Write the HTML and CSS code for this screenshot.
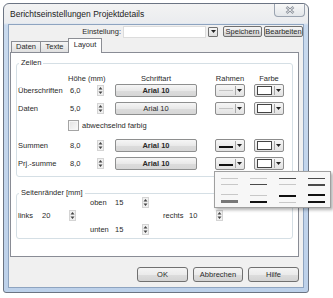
FILE: index.html
```html
<!DOCTYPE html>
<html lang="de">
<head>
    <meta charset="UTF-8">
    <title>Berichtseinstellungen Projektdetails</title>
    <link rel="stylesheet" href="styles.css">
</head>
<body>
    <div class="window">
        <div class="titlebar">
            <span class="title">Berichtseinstellungen Projektdetails</span>
            <span class="close">
                <svg width="10" height="8" viewBox="0 0 10 8"><path d="M1.5 1l7 6M8.5 1l-7 6" stroke="#8b929c" stroke-width="2.6"/><path d="M1.5 1l7 6M8.5 1l-7 6" stroke="#f4f4f4" stroke-width="0.9"/></svg>
            </span>
        </div>
        <div class="client">
            <div class="toolbar">
                <span>Einstellung:</span>
                <span class="combo"></span>
                <span class="dd-btn"><svg width="5" height="3" viewBox="0 0 5 3"><path d="M0 0h5L2.5 3z" fill="#222"/></svg></span>
                <button class="btn small">Speichern</button>
                <button class="btn small">Bearbeiten</button>
            </div>
            <div class="tabs">
                <div class="tab t-daten">Daten</div>
                <div class="tab t-texte">Texte</div>
                <div class="tab t-layout active">Layout</div>
            </div>
            <div class="panel">
                <div class="group">
                    <div class="group-title">Zeilen</div>
                    <div class="rows">
                        <div class="row head">
                            <span></span>
                            <span>Höhe (mm)</span>
                            <span class="center font-col">Schriftart</span>
                            <span class="center dd-col">Rahmen</span>
                            <span class="center dd-col">Farbe</span>
                        </div>
                        <div class="row">
                            <span>Überschriften</span>
                            <span class="spin">6,0<svg width="7" height="11" viewBox="0 0 7 11"><rect x="0.5" y="0.5" width="6" height="10" fill="#f0f0f0" stroke="#d4d4d4"/><path d="M1.5 4.5h4L3.5 2zM1.5 6.5h4L3.5 9z" fill="#444"/></svg></span>
                            <button class="font-btn bold">Arial 10</button>
                            <span class="dd"><span class="dd-face"><i class="ln light"></i></span><span class="dd-arrow"><svg width="5" height="3" viewBox="0 0 5 3"><path d="M0 0h5L2.5 3z" fill="#222"/></svg></span></span>
                            <span class="dd"><span class="dd-face"><i class="swatch"></i></span><span class="dd-arrow"><svg width="5" height="3" viewBox="0 0 5 3"><path d="M0 0h5L2.5 3z" fill="#222"/></svg></span></span>
                        </div>
                        <div class="row mt5">
                            <span>Daten</span>
                            <span class="spin">5,0<svg width="7" height="11" viewBox="0 0 7 11"><rect x="0.5" y="0.5" width="6" height="10" fill="#f0f0f0" stroke="#d4d4d4"/><path d="M1.5 4.5h4L3.5 2zM1.5 6.5h4L3.5 9z" fill="#444"/></svg></span>
                            <button class="font-btn">Arial 10</button>
                            <span class="dd"><span class="dd-face"><i class="ln light"></i></span><span class="dd-arrow"><svg width="5" height="3" viewBox="0 0 5 3"><path d="M0 0h5L2.5 3z" fill="#222"/></svg></span></span>
                            <span class="dd"><span class="dd-face"><i class="swatch"></i></span><span class="dd-arrow"><svg width="5" height="3" viewBox="0 0 5 3"><path d="M0 0h5L2.5 3z" fill="#222"/></svg></span></span>
                        </div>
                        <div class="row check-row">
                            <span></span>
                            <label class="check"><i class="box"></i>abwechselnd farbig</label>
                        </div>
                        <div class="row mt7">
                            <span>Summen</span>
                            <span class="spin">8,0<svg width="7" height="11" viewBox="0 0 7 11"><rect x="0.5" y="0.5" width="6" height="10" fill="#f0f0f0" stroke="#d4d4d4"/><path d="M1.5 4.5h4L3.5 2zM1.5 6.5h4L3.5 9z" fill="#444"/></svg></span>
                            <button class="font-btn bold">Arial 10</button>
                            <span class="dd"><span class="dd-face"><i class="ln heavy"></i></span><span class="dd-arrow"><svg width="5" height="3" viewBox="0 0 5 3"><path d="M0 0h5L2.5 3z" fill="#222"/></svg></span></span>
                            <span class="dd"><span class="dd-face"><i class="swatch"></i></span><span class="dd-arrow"><svg width="5" height="3" viewBox="0 0 5 3"><path d="M0 0h5L2.5 3z" fill="#222"/></svg></span></span>
                        </div>
                        <div class="row mt5">
                            <span>Prj.-summe</span>
                            <span class="spin">8,0<svg width="7" height="11" viewBox="0 0 7 11"><rect x="0.5" y="0.5" width="6" height="10" fill="#f0f0f0" stroke="#d4d4d4"/><path d="M1.5 4.5h4L3.5 2zM1.5 6.5h4L3.5 9z" fill="#444"/></svg></span>
                            <button class="font-btn bold">Arial 10</button>
                            <span class="dd"><span class="dd-face"><i class="ln heavy"></i></span><span class="dd-arrow"><svg width="5" height="3" viewBox="0 0 5 3"><path d="M0 0h5L2.5 3z" fill="#222"/></svg></span></span>
                            <span class="dd"><span class="dd-face"><i class="swatch"></i></span><span class="dd-arrow"><svg width="5" height="3" viewBox="0 0 5 3"><path d="M0 0h5L2.5 3z" fill="#222"/></svg></span></span>
                        </div>
                    </div>
                </div>
                <div class="group margins">
                    <div class="group-title">Seitenränder [mm]</div>
                    <div class="margin-grid">
                        <span class="m-oben-l">oben</span>
                        <span class="spin m-oben">15<svg width="7" height="11" viewBox="0 0 7 11"><rect x="0.5" y="0.5" width="6" height="10" fill="#f0f0f0" stroke="#d4d4d4"/><path d="M1.5 4.5h4L3.5 2zM1.5 6.5h4L3.5 9z" fill="#444"/></svg></span>
                        <span class="m-links-l">links</span>
                        <span class="spin m-links">20<svg width="7" height="11" viewBox="0 0 7 11"><rect x="0.5" y="0.5" width="6" height="10" fill="#f0f0f0" stroke="#d4d4d4"/><path d="M1.5 4.5h4L3.5 2zM1.5 6.5h4L3.5 9z" fill="#444"/></svg></span>
                        <span class="m-rechts-l">rechts</span>
                        <span class="spin m-rechts">10<svg width="7" height="11" viewBox="0 0 7 11"><rect x="0.5" y="0.5" width="6" height="10" fill="#f0f0f0" stroke="#d4d4d4"/><path d="M1.5 4.5h4L3.5 2zM1.5 6.5h4L3.5 9z" fill="#444"/></svg></span>
                        <span class="m-unten-l">unten</span>
                        <span class="spin m-unten">15<svg width="7" height="11" viewBox="0 0 7 11"><rect x="0.5" y="0.5" width="6" height="10" fill="#f0f0f0" stroke="#d4d4d4"/><path d="M1.5 4.5h4L3.5 2zM1.5 6.5h4L3.5 9z" fill="#444"/></svg></span>
                    </div>
                </div>
            </div>
            <div class="footer">
                <button class="btn big">OK</button>
                <button class="btn big w50">Abbrechen</button>
                <button class="btn big">Hilfe</button>
            </div>
        </div>
    </div>

    <!-- Linienauswahl (offenes Dropdown) -->
    <div class="popup">
        <div class="cell"><i class="pl t"></i><i class="pl t"></i></div>
        <div class="cell"><i class="pl t"></i><i class="pl d"></i></div>
        <div class="cell"><i class="pl d"></i><i class="pl t"></i></div>
        <div class="cell"><i class="pl d"></i><i class="pl d"></i></div>
        <div class="cell"><i class="pl t"></i><i class="pl g"></i></div>
        <div class="cell"><i class="pl t"></i><i class="pl b"></i></div>
        <div class="cell"><i class="pl b"></i><i class="pl t"></i></div>
        <div class="cell"><i class="pl b"></i><i class="pl b"></i></div>
    </div>
</body>
</html>
```

FILE: styles.css
```css
* {
    box-sizing: border-box;
}
body {
    margin: 0;
    background: #fff;
    font-family: "Liberation Sans", Arial, sans-serif;
    font-size: 7.5px;
    color: #2a2a2a;
}
button {
    font-family: inherit;
    font-size: inherit;
    color: inherit;
    padding: 0;
}
.window {
    width: 306px;
    height: 290px;
    margin: 3px 0 0 3px;
    border: 1px solid #6b7483;
    border-radius: 6px 6px 3px 3px;
    padding: 0 4px 4px;
    background: linear-gradient(#f3f3f3, #eaecef 19px, #c9daee 21px, #bdd1ea);
    display: flex;
    flex-direction: column;
}
.titlebar {
    height: 20px;
    display: flex;
    justify-content: space-between;
}
.title {
    align-self: center;
    font-size: 8.5px;
    padding-left: 2px;
    color: #222;
}
.close {
    width: 31px;
    height: 13px;
    margin-right: -1px;
    border: 1px solid #9aa3b0;
    border-top: none;
    border-radius: 0 0 4px 4px;
    background: linear-gradient(#f8f8f8, #e3e6ea);
    display: flex;
    align-items: center;
    justify-content: center;
}
.client {
    flex: 1;
    background: #f0f0f0;
    border: 1px solid #8ea4c0;
    display: flex;
    flex-direction: column;
}
.toolbar {
    height: 13px;
    display: flex;
    align-items: center;
    justify-content: flex-end;
    gap: 2px;
}
.combo {
    width: 83px;
    height: 12px;
    background: #fff;
    border: 1px solid #dcdcdc;
}
.dd-btn {
    width: 10px;
    height: 10px;
    margin-right: 3px;
    border: 1px solid #707070;
    border-radius: 1px;
    background: linear-gradient(#f6f6f6, #dcdcdc);
    display: flex;
    align-items: center;
    justify-content: center;
}
.btn {
    border: 1px solid #707070;
    border-radius: 3px;
    background: linear-gradient(#f4f4f4, #ebebeb 50%, #dddddd 51%, #d3d3d3);
}
.btn.small {
    width: 39px;
    height: 11px;
    line-height: 9px;
    border-radius: 2px;
}
.btn.big {
    width: 51px;
    height: 15px;
}
.btn.w50 {
    width: 50px;
}
.tabs {
    height: 14px;
    display: flex;
    align-items: flex-end;
    padding-left: 2px;
    position: relative;
    z-index: 1;
}
.tab {
    height: 11px;
    line-height: 10px;
    text-align: center;
    border: 1px solid #8c8e94;
    border-bottom: none;
    background: linear-gradient(#f5f5f5, #e0e0e0);
}
.tab + .tab {
    margin-left: -1px;
}
.t-daten { width: 30px; }
.t-texte { width: 29px; }
.t-layout { width: 34px; }
.tab.active {
    height: 15px;
    margin-bottom: -1px;
    line-height: 11px;
    background: #fff;
}
.panel {
    width: 289px;
    height: 205px;
    margin-left: 1px;
    background: #fff;
    border: 1px solid #898c95;
}
.group {
    margin: 10px 5px 0;
    border: 1px solid #d5dfe5;
    border-radius: 3px;
}
.group.margins {
    margin-top: 16px;
}
.group-title {
    width: fit-content;
    height: 10px;
    line-height: 10px;
    margin: -6px 0 0 2px;
    padding: 0 2px;
    background: #fff;
}
.rows {
    padding: 5px 0 6px 1px;
}
.row {
    height: 13px;
    display: grid;
    grid-template-columns: 50px 47px 100px 39px 30px;
    align-items: center;
}
.row.head {
    height: 10px;
    margin-bottom: 1px;
}
.row.mt5 { margin-top: 5px; }
.row.mt7 { margin-top: 7px; }
.row.check-row { margin-top: 4px; }
.center { text-align: center; }
.font-col { width: 82px; }
.dd-col { width: 30px; }
.spin {
    width: 38px;
    height: 12px;
    padding: 0 2px;
    display: flex;
    align-items: center;
    justify-content: space-between;
    background: #fff;
}
.font-btn {
    width: 82px;
    height: 13px;
    border: 1px solid #8e8f8f;
    border-radius: 2px;
    background: linear-gradient(#f6f6f6, #e9e9e9 50%, #dcdcdc 51%, #d6d6d6);
}
.font-btn.bold {
    font-weight: bold;
}
.dd {
    width: 30px;
    height: 13px;
    padding: 0 2px;
    border: 1px solid #8c8c8c;
    border-radius: 2px;
    background: linear-gradient(#f6f6f6, #e2e2e2);
    display: flex;
    align-items: center;
}
.dd-face {
    flex: 1;
    height: 9px;
    margin-right: 1px;
    display: flex;
    align-items: center;
}
.dd-arrow {
    width: 7px;
    height: 9px;
    border-left: 1px solid #a8a8a8;
    display: flex;
    align-items: center;
    justify-content: flex-end;
}
.ln {
    display: block;
    width: 100%;
    margin: 0 1px;
}
.ln.light {
    height: 1px;
    background: #c4c4c4;
}
.ln.heavy {
    height: 2px;
    margin-top: 3px;
    background: #111;
}
.swatch {
    display: block;
    width: 100%;
    height: 9px;
    margin-right: 1px;
    border: 1px solid #444;
    background: #fff;
}
.check {
    grid-column: 2 / 6;
    display: flex;
    align-items: center;
    gap: 3px;
}
.box {
    width: 11px;
    height: 11px;
    border: 1px solid #a4a4a4;
    background: linear-gradient(135deg, #e2e2e2, #fafafa);
    box-shadow: inset 0 0 0 1px #f6f6f6;
}
.margin-grid {
    margin-top: -3px;
    padding: 0 0 2px 1px;
    display: grid;
    grid-template-columns: 22px 50px 23px 50px 24px 38px;
    grid-template-rows: 14px 13px 14px;
    align-items: center;
}
.m-oben-l { grid-area: 1 / 3; }
.m-oben { grid-area: 1 / 4; }
.m-links-l { grid-area: 2 / 1; }
.m-links { grid-area: 2 / 2; }
.m-rechts-l { grid-area: 2 / 5; }
.m-rechts { grid-area: 2 / 6; }
.m-unten-l { grid-area: 3 / 3; }
.m-unten { grid-area: 3 / 4; }
.footer {
    display: flex;
    justify-content: flex-end;
    gap: 5px;
    padding: 10px 4px 0 0;
}
.popup {
    position: absolute;
    left: 214px;
    top: 171px;
    width: 117px;
    height: 37px;
    padding-top: 1px;
    background: #f7f7f7;
    border: 1px solid #a0a0a0;
    box-shadow: 2px 2px 3px rgba(0, 0, 0, 0.3);
    display: grid;
    grid-template-columns: repeat(4, 29px);
    grid-template-rows: 17px 17px;
}
.cell {
    display: flex;
    flex-direction: column;
    align-items: center;
    justify-content: center;
    gap: 5px;
}
.pl {
    display: block;
    width: 17px;
    height: 1px;
}
.pl.t { background: #c8c8c8; }
.pl.d { background: #4a4a4a; height: 1.5px; }
.pl.b { background: #111; height: 2px; }
.pl.g { background: #777; height: 3px; }
```
